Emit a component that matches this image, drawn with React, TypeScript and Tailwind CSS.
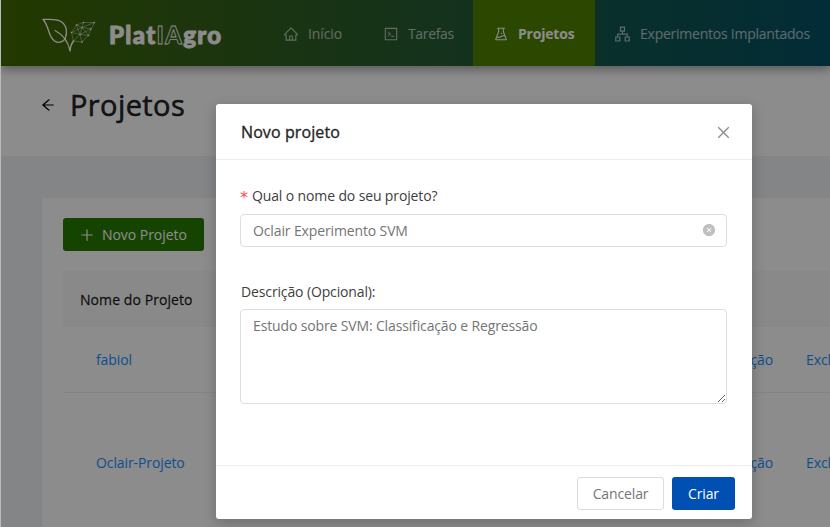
import React from "react";
import {
  AiFillCloseCircle,
  AiOutlineArrowLeft,
  AiOutlineClose,
  AiOutlineCode,
  AiOutlineExperiment,
  AiOutlineHome,
  AiOutlinePlus,
} from "react-icons/ai";

function Logo() {
  return (
    <div className="ml-[41px] flex w-[181px] shrink-0 items-center">
      <svg width="54" height="38" viewBox="0 0 54 38" fill="none" stroke="#fff" strokeLinecap="round" strokeLinejoin="round">
        <path
          d="M1 5.500C7 5.500 14 4.500 19 7.500c6 4 6.500 11 4.300 16.500-1.500 4-6 5.500-10.300 3.300C5.500 23 8 13 1 5.500Z"
          strokeWidth="1.300"
        />
        <path d="M13 16.500c6.500 3.500 13 9 15 20.500 .3-4.500 1.500-7.500 3.500-10" strokeWidth="1.300" />
        <path
          d="M52.300 8.500 41.500 8.500 34.500 11 29.500 18.500 31.500 27 40 28 46.500 21.500 49 15ZM34.500 11 40 13.500 52.300 8.500M41.500 8.500 40 13.500 49 15M29.500 18.500 40 13.500 38 20.500 49 15M29.500 18.500 38 20.500 31.500 27M38 20.500 40 28M38 20.500 46.500 21.500 40 13.500M34.500 11 38 20.500"
          strokeWidth=".5"
          opacity=".8"
        />
        <g fill="#fff" stroke="none">
          <circle cx="52.300" cy="8.500" r=".8" />
          <circle cx="41.500" cy="8.500" r=".8" />
          <circle cx="34.500" cy="11" r=".8" />
          <circle cx="40" cy="13.500" r=".7" />
          <circle cx="49" cy="15" r=".8" />
          <circle cx="29.500" cy="18.500" r=".8" />
          <circle cx="38" cy="20.500" r=".7" />
          <circle cx="46.500" cy="21.500" r=".8" />
          <circle cx="31.500" cy="27" r=".8" />
          <circle cx="40" cy="28" r=".8" />
        </g>
      </svg>
      <span className="mt-1 ml-[13px] font-[Lato] text-[24px] leading-6 font-black tracking-[1.3px] [-webkit-text-stroke:0.9px_#fff]">
        Plat
        <span className="text-transparent [-webkit-text-stroke:0.8px_#fff]">IA</span>
        gro
      </span>
    </div>
  );
}

function ClusterIcon() {
  return (
    <svg width="15" height="16" viewBox="0 0 15 16" fill="none" stroke="currentColor" strokeWidth="1.200">
      <path d="M5.500 1.200h4v4h-4zM.8 11h4v4h-4zM10.200 11h4v4h-4zM7.500 5.200v3M2.800 11V8.200h9.400V11" />
    </svg>
  );
}

function Row({ name, height }: { name: string; height: string }) {
  return (
    <div className={"flex shrink-0 items-center border-b border-[#f0f0f0] pt-0.5 text-[#1890ff] " + height}>
      <span className="ml-[33px] w-[560px] shrink-0 tracking-[-0.1px]">{name}</span>
      <span className="w-[117px] shrink-0 text-right tracking-[-0.1px]">Editar Descrição</span>
      <span className="ml-[33px] tracking-[-0.1px]">Excluir</span>
    </div>
  );
}

export default function App() {
  return (
    <div className="relative h-[527px] w-[830px] overflow-hidden bg-white font-['Open_Sans','Noto_Sans',sans-serif] text-[14px] leading-[22px]">
      <div className="flex h-full flex-col overflow-hidden bg-[#f0f2f5] pl-px whitespace-nowrap">
        <header className="z-10 flex h-[66px] shrink-0 items-center bg-[linear-gradient(90deg,#406800_0%,#31601d_29%,#245b37_56%,#0f5750_76%,#055066_100%)] text-white shadow-[0_3px_10px_rgba(0,0,0,0.4)]">
          <Logo />
          <nav className="flex h-full items-center pt-0.5 text-white/65">
            <div className="ml-[60px] flex w-[100px] items-center gap-[9px] tracking-[-0.1px]">
              <AiOutlineHome size={16} />Início
            </div>
            <div className="flex w-[90px] items-center gap-[9px] tracking-[-0.35px]">
              <AiOutlineCode size={16} />Tarefas
            </div>
            <div className="-mt-0.5 flex h-[66px] w-[122px] items-center gap-[9px] bg-[#508100] pt-0.5 pl-5 font-bold tracking-[-0.2px] text-white">
              <AiOutlineExperiment size={16} />Projetos
            </div>
            <div className="flex items-center gap-[10px] pl-5 tracking-[-0.24px]">
              <ClusterIcon />Experimentos Implantados
            </div>
          </nav>
        </header>
        <div className="flex h-[90px] shrink-0 items-start bg-white pt-[20px] pl-[39px] text-black/85">
          <AiOutlineArrowLeft size={16} className="mt-[11px] text-black" />
          <h1 className="ml-[14px] text-[29px] leading-[38px] tracking-[0.4px] [-webkit-text-stroke:0.6px_currentColor]">Projetos</h1>
        </div>
        <main className="mt-[42px] ml-[41px] flex h-[400px] flex-col bg-white pt-5 pl-[21px]">
          <button className="flex h-[33px] w-[141px] shrink-0 items-center rounded-[3px] bg-[#267d00] pl-4 text-white">
            <AiOutlinePlus size={16} />
            <span className="ml-[7px] tracking-[-0.05px]">Novo Projeto</span>
          </button>
          <div className="mt-5 flex h-[55px] shrink-0 items-center border-b border-[#f0f0f0] bg-[#fafafa] pt-[3px] pl-[17px] tracking-[0.08px] text-black/85 [-webkit-text-stroke:0.3px_currentColor]">
            Nome do Projeto
          </div>
          <Row name="fabiol" height="h-[67px]" />
          <Row name="Oclair-Projeto" height="h-[139px]" />
        </main>
      </div>

      <div className="absolute inset-y-0 right-0 left-px z-20 bg-black/45" />
      <div className="absolute inset-y-0 left-0 z-20 w-px bg-[#b9bbbd]" />

      <section className="absolute top-[104px] left-[216px] z-30 flex h-[415px] w-[536px] flex-col rounded-[3px] bg-white tracking-[-0.13px] text-[#595959] shadow-[0_4px_14px_rgba(0,0,0,0.22)]">
        <div className="flex h-[56px] shrink-0 items-center justify-between border-b border-[#ececec] pt-px pr-5 pl-[25px]">
          <h2 className="text-[16px] tracking-[0.1px] text-[#262626] [-webkit-text-stroke:0.35px_currentColor]">Novo projeto</h2>
          <AiOutlineClose size={17} className="text-[#8c8c8c]" />
        </div>
        <div className="flex h-[305px] shrink-0 flex-col pt-[25px] pr-[25px] pl-[24px]">
          <label className="flex h-[22px] items-center text-[#404040]">
            <span className="mt-1 w-3 font-['DejaVu_Sans'] text-[16px] text-[#ff4d4f]">*</span>
            Qual o nome do seu projeto?
          </label>
          <div className="mt-[7px] flex h-[33px] items-center justify-between rounded-[4px] border border-[#dedede] pt-px pr-[10px] pl-3 text-[#757575]">
            <span>Oclair Experimento SVM</span>
            <AiFillCloseCircle size={14} className="-mt-0.5 text-[#bfbfbf]" />
          </div>
          <label className="mt-[34px] pl-px text-[#404040]">Descrição (Opcional):</label>
          <textarea
            className="mt-[6px] block h-[95px] w-full resize rounded-[4px] border border-[#dedede] px-3 py-[5px] tracking-[-0.14px] text-[#757575] outline-none"
            defaultValue="Estudo sobre SVM: Classificação e Regressão"
          />
        </div>
        <div className="flex h-[54px] items-start gap-2 border-t border-[#ececec] pt-[11px] pl-[361px]">
          <button className="h-[33px] w-[87px] rounded-[3px] border border-[#dcdcdc] pt-px text-[#757575]">Cancelar</button>
          <button className="h-[33px] w-[63px] rounded-[3px] bg-[#0050b3] pt-px text-white">Criar</button>
        </div>
      </section>
    </div>
  );
}
